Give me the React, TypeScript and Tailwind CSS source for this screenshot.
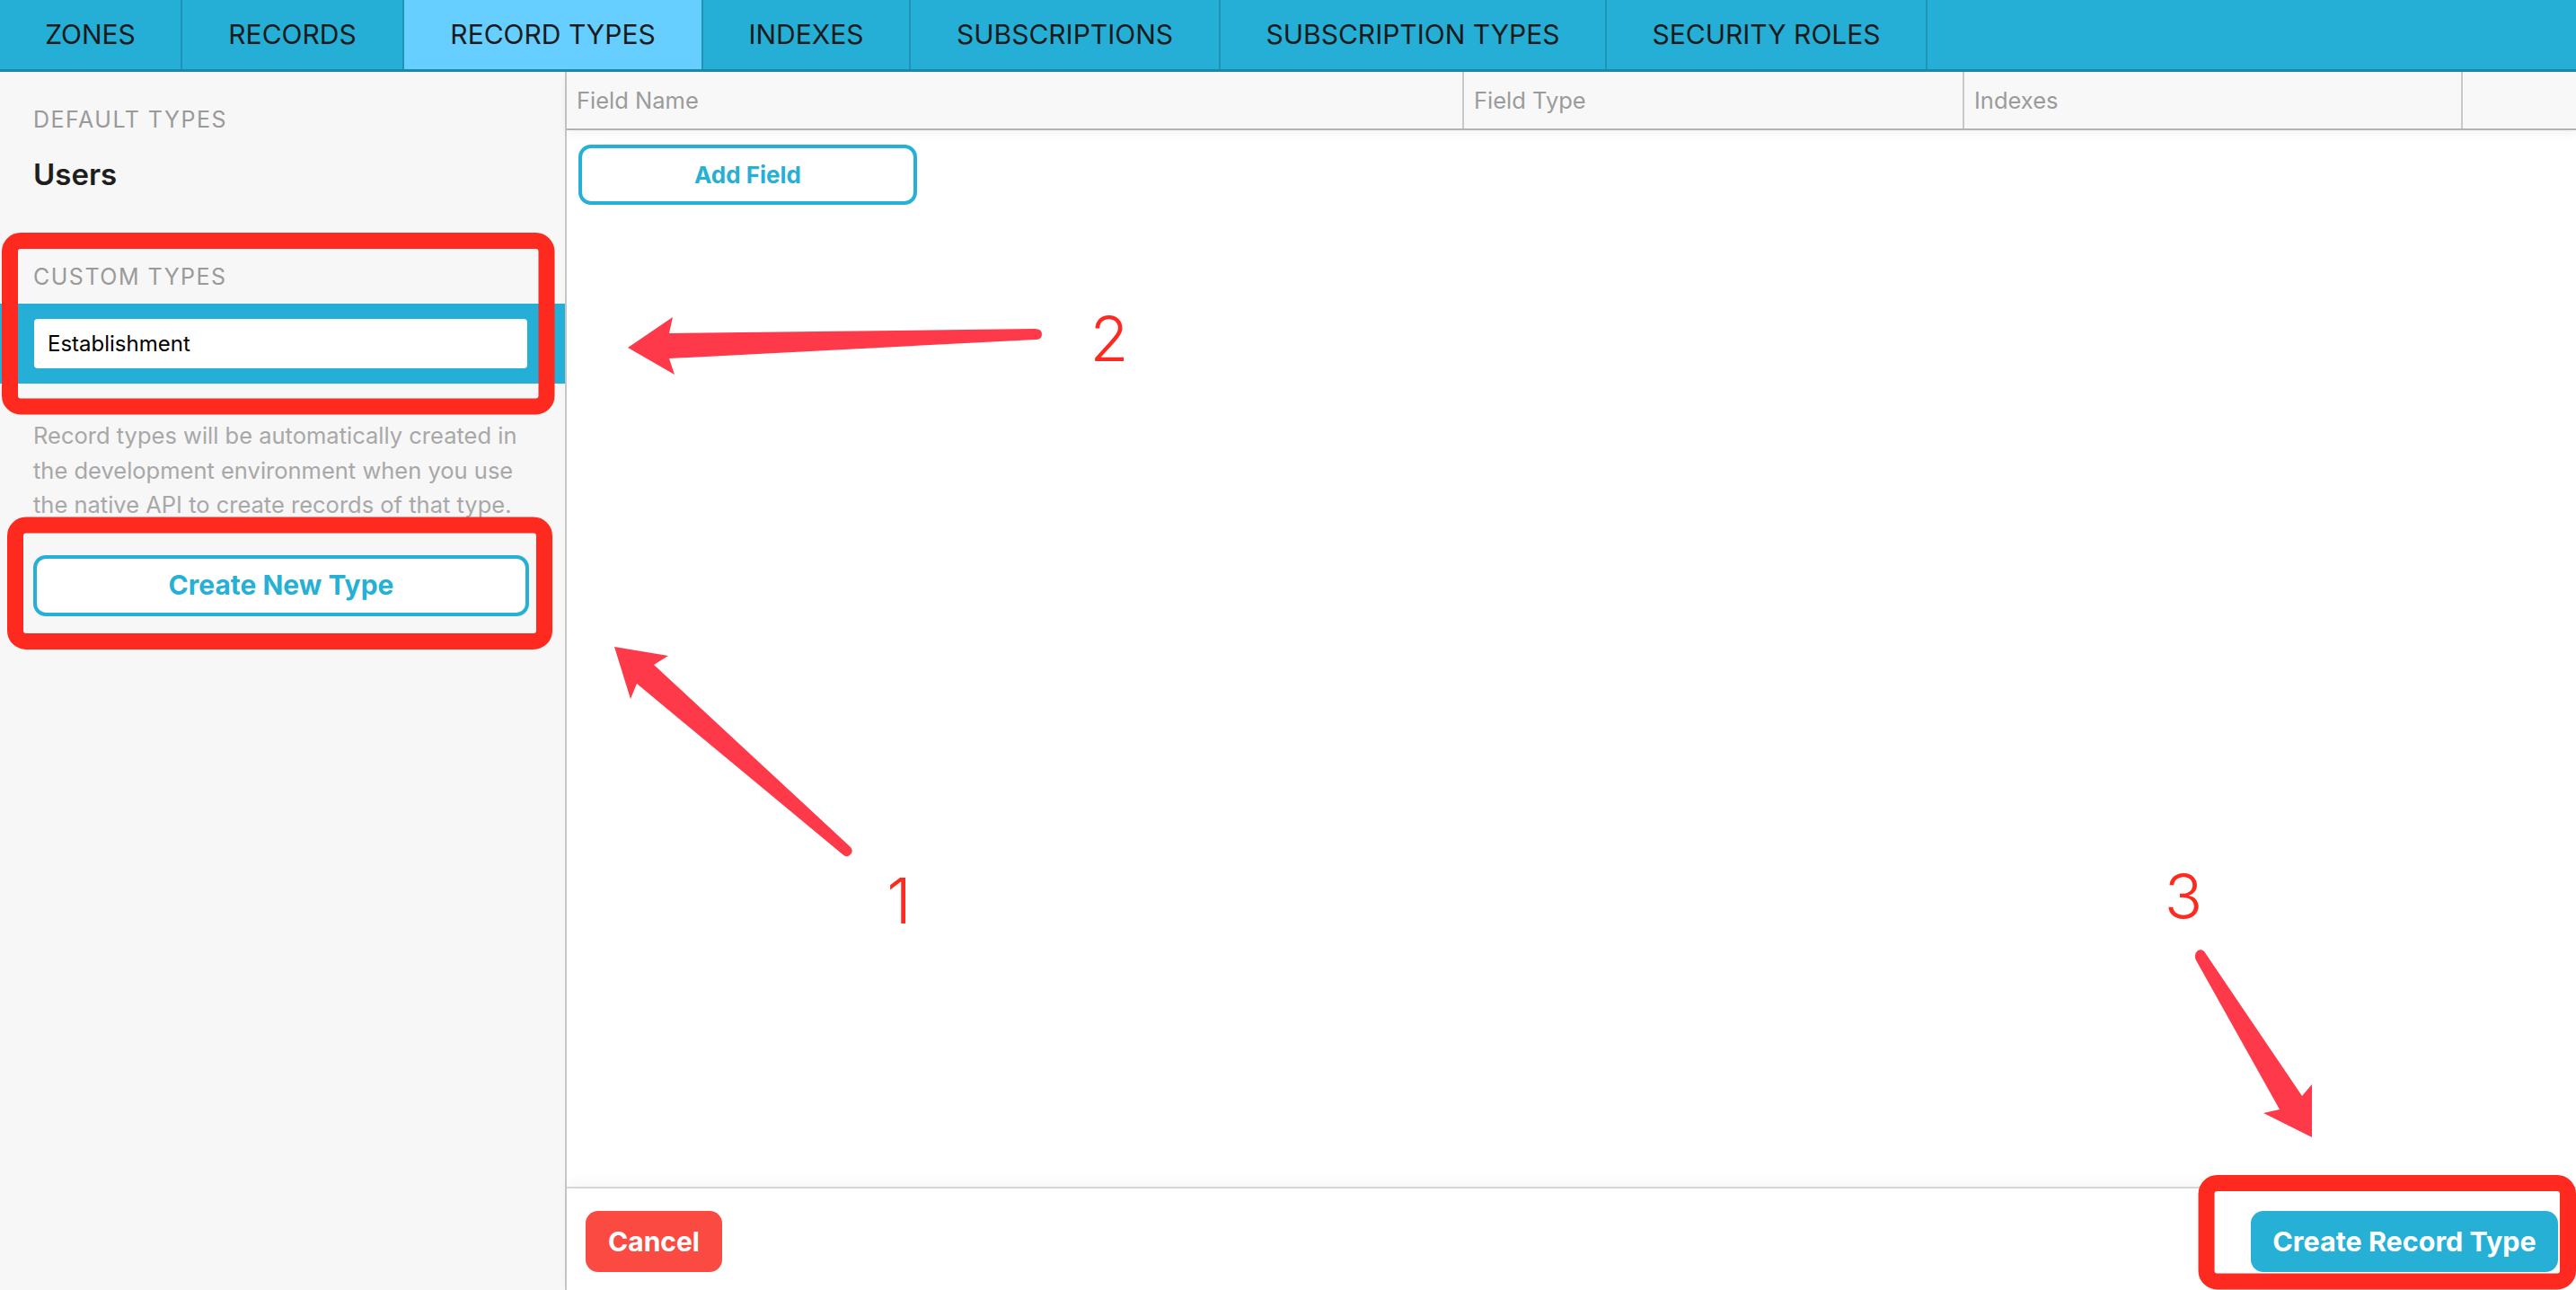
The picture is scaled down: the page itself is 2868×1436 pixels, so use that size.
import React from 'react';

const tabs = [
  { label: 'ZONES', w: 'w-[203px]' },
  { label: 'RECORDS', w: 'w-[247px]' },
  { label: 'RECORD TYPES', w: 'w-[333px]', active: true },
  { label: 'INDEXES', w: 'w-[231px]' },
  { label: 'SUBSCRIPTIONS', w: 'w-[345px]' },
  { label: 'SUBSCRIPTION TYPES', w: 'w-[430px]' },
  { label: 'SECURITY ROLES', w: 'w-[357px]' },
];

const columns = [
  { label: 'Field Name', w: 'w-[997px]' },
  { label: 'Field Type', w: 'w-[557px]' },
  { label: 'Indexes', w: 'w-[555px]' },
];

function TabBar() {
  return (
    <div className="h-[80px] flex shrink-0 bg-[#25aed6] border-b-[3px] border-[#1d89a9]">
      {tabs.map((t) => (
        <div
          key={t.label}
          className={`${t.w} h-full flex items-center justify-center border-r-2 border-[#1f93b6] text-[30px] text-[#1b1b1b] ${
            t.active ? 'bg-[#66cfff]' : ''
          }`}
        >
          {t.label}
        </div>
      ))}
    </div>
  );
}

function Sidebar() {
  return (
    <div className="w-[631px] shrink-0 h-full bg-[#f7f7f7] border-r-2 border-[#c6c6c6] flex flex-col pt-[41px]">
      <div className="pl-[37px] text-[25px] leading-[25px] tracking-[1.5px] text-[#9a9a9a]">DEFAULT TYPES</div>
      <div className="pl-[37px] mt-[32px] text-[33px] leading-[33px] font-semibold text-[#1e1e1e]">Users</div>
      <div className="pl-[37px] mt-[85px] text-[25px] leading-[25px] tracking-[1.5px] text-[#9a9a9a]">CUSTOM TYPES</div>
      <div className="mt-[17px] h-[89px] bg-[#26afd6] flex items-center pl-[38px] pr-[42px]">
        <div className="w-full h-[55px] bg-white rounded-[4px] flex items-center pl-[15px] text-[24px] text-black">
          Establishment
        </div>
      </div>
      <p className="mt-[39px] pl-[37px] pr-[36px] text-[25.5px] leading-[38.5px] text-[#a8a8a8]">
        Record types will be automatically created in the development environment when you use the native API to
        create records of that type.
      </p>
      <button className="mt-[36px] ml-[37px] w-[552px] h-[68px] rounded-[14px] border-4 border-[#27b0d6] bg-white text-[30px] font-bold text-[#27b0d6]">
        Create New Type
      </button>
    </div>
  );
}

function MainPanel() {
  return (
    <div className="flex-1 h-full flex flex-col bg-white">
      <div className="h-[65px] shrink-0 flex bg-[#f8f8f8] border-b-2 border-[#b3b3b3] shadow-[0_4px_10px_rgba(0,0,0,0.05)] relative z-10">
        {columns.map((c, i) => (
          <div
            key={c.label}
            className={`${c.w} h-full flex items-center pl-[11px] text-[25.5px] leading-[26px] text-[#9b9b9b] ${
              i > 0 ? 'border-l-2 border-[#c9c9c9]' : ''
            }`}
          >
            {c.label}
          </div>
        ))}
        <div className="flex-1 h-full border-l-2 border-[#c9c9c9]" />
      </div>
      <div className="flex-1 pt-[16px] pl-[13px]">
        <button className="w-[377px] h-[67px] rounded-[14px] border-4 border-[#27b0d6] bg-white text-[26px] font-bold text-[#27b0d6]">
          Add Field
        </button>
      </div>
      <div className="h-[115px] shrink-0 border-t-2 border-[#d6d6d6] shadow-[0_-6px_12px_rgba(0,0,0,0.03)] flex items-start justify-between pt-[25px] pl-[21px] pr-[20px]">
        <button className="w-[152px] h-[68px] rounded-[14px] bg-[#fb4a42] text-white text-[30px] font-bold">
          Cancel
        </button>
        <button className="w-[342px] h-[68px] rounded-[14px] bg-[#27b0d6] text-white text-[30.5px] font-bold">
          Create Record Type
        </button>
      </div>
    </div>
  );
}

function Annotations() {
  const red = '#ff2a1f';
  const arrow = '#fe3a4a';
  return (
    <svg className="absolute inset-0 pointer-events-none" width="2868" height="1436" viewBox="0 0 2868 1436">
      <rect x="11" y="268" width="597.5" height="184.5" rx="12" fill="none" stroke={red} strokeWidth="18" />
      <rect x="17" y="584.5" width="589" height="129.5" rx="12" fill="none" stroke={red} strokeWidth="18" />
      <rect x="2456.5" y="1317" width="402.5" height="109.5" rx="12" fill="none" stroke={red} strokeWidth="18" />

      <path d="M684 720 L744 730 L728 740 L947 943 Q951 948 946 952 Q942 955 938 951 L709 761 L702 778 Z" fill={arrow} />
      <path d="M699 387 L749 353 L745 371 L1152 366 Q1160 366 1160 372 Q1160 378 1153 378 L745 399 L751 417 Z" fill={arrow} />
      <path d="M2454 1059 L2563 1220 L2574 1207 L2574 1266 L2520 1239 L2538 1235 L2445 1069 Q2442 1062 2447 1058 Q2451 1056 2454 1059 Z" fill={arrow} />

      <g fill={red} fontFamily="Inter, 'Liberation Sans', sans-serif" fontWeight="300" fontSize="70" textAnchor="middle">
        <text x="1001" y="1028">1</text>
        <text x="1235" y="402">2</text>
        <text x="2431" y="1023">3</text>
      </g>
    </svg>
  );
}

export default function App() {
  return (
    <div
      className="relative w-[2868px] h-[1436px] overflow-hidden flex flex-col bg-white"
      style={{ fontFamily: "Inter, 'Liberation Sans', sans-serif" }}
    >
      <TabBar />
      <div className="flex-1 flex min-h-0">
        <Sidebar />
        <MainPanel />
      </div>
      <Annotations />
    </div>
  );
}
